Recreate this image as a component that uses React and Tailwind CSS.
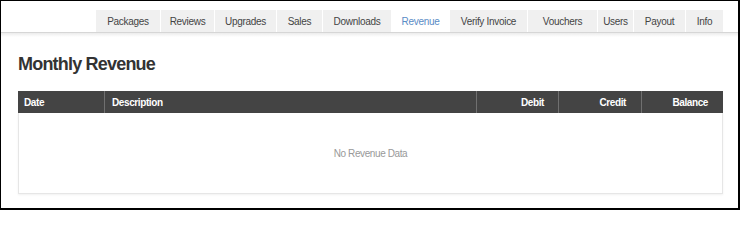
import React from "react";

const tabs = [
  { label: "Packages", w: "w-[65px]" },
  { label: "Reviews", w: "w-[54px]" },
  { label: "Upgrades", w: "w-[62px]" },
  { label: "Sales", w: "w-[46px]" },
  { label: "Downloads", w: "w-[69px]" },
  { label: "Revenue", w: "w-[58px]", active: true },
  { label: "Verify Invoice", w: "w-[78px]" },
  { label: "Vouchers", w: "w-[70px]" },
  { label: "Users", w: "w-[36px]" },
  { label: "Payout", w: "w-[52px]" },
  { label: "Info", w: "w-[38px]" },
];

export default function App() {
  return (
    <div className="w-[740px] h-[210px] box-border border-l border-t border-r-2 border-b-2 border-black bg-white font-['Liberation_Sans',Arial,sans-serif] overflow-hidden">
      {/* Tab bar */}
      <div className="pt-[9px]">
        <div className="flex justify-end pr-[15px]">
          {tabs.map((t) => (
            <div
              key={t.label}
              className={`${t.w} h-[22px] flex items-center justify-center border-l border-white text-[10px] tracking-[-0.3px] ${
                t.active ? "bg-white text-[#5a8cc6]" : "bg-[#f0f0f0] text-[#444444]"
              }`}
            >
              {t.label}
            </div>
          ))}
        </div>
        <div className="h-px bg-[#d6d6d6]" />
        <div className="h-[4px] bg-gradient-to-b from-[#ececec] to-white" />
      </div>

      {/* Content */}
      <div className="pl-[17px] pr-[15px]">
        <h1 className="mt-[17px] text-[18px] leading-[21px] font-bold text-[#333333] tracking-[-0.8px]">
          Monthly Revenue
        </h1>

        <div className="mt-[16px]">
          <div className="grid grid-cols-[86px_1fr_82px_83px_82px] h-[22px] bg-[#444444] text-white text-[10px] font-bold tracking-[-0.4px]">
            <div className="flex items-center pl-[6px]">Date</div>
            <div className="flex items-center pl-[7px] border-l border-[#707070]">Description</div>
            <div className="flex items-center justify-end pr-[14px] border-l border-[#707070]">Debit</div>
            <div className="flex items-center justify-end pr-[15px] border-l border-[#707070]">Credit</div>
            <div className="flex items-center justify-end pr-[15px] border-l border-[#707070]">Balance</div>
          </div>
          <div className="h-[81px] box-border border border-t-0 border-[#e6e6e6] shadow-[0_1px_2px_rgba(0,0,0,0.06)] flex items-center justify-center text-[10px] text-[#999999] tracking-[-0.4px]">
            No Revenue Data
          </div>
        </div>
      </div>
    </div>
  );
}
